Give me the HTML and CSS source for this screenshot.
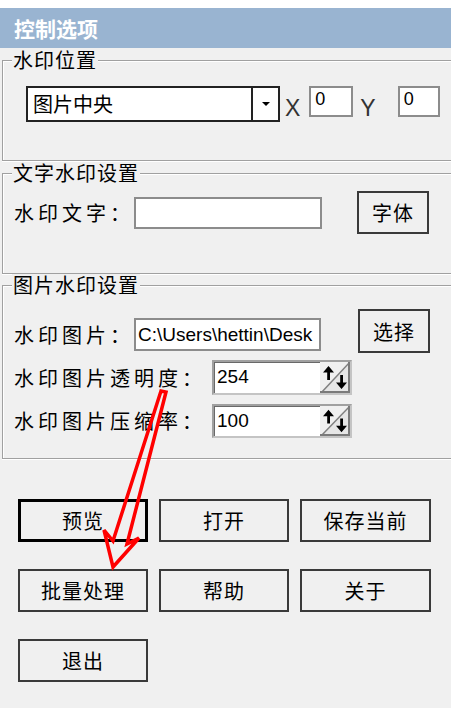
FILE: index.html
```html
<!DOCTYPE html>
<html lang="zh-CN">
<head>
    <meta charset="UTF-8">
    <meta name="viewport" content="width=device-width, initial-scale=1.0">
    <title>控制选项</title>
    <link rel="stylesheet" href="styles.css">
</head>
<body>
    <div class="panel">
        <div class="topbar"></div>
        <div class="caption">控制选项</div>

        <fieldset class="group group-pos">
            <legend>水印位置</legend>
            <div class="row row-pos">
                <div class="combo">
                    <span class="combo-text">图片中央</span>
                    <span class="combo-btn"><span class="caret"></span></span>
                </div>
                <span class="axis axis-x">X</span>
                <div class="field field-x">0</div>
                <span class="axis axis-y">Y</span>
                <div class="field field-y">0</div>
            </div>
        </fieldset>

        <fieldset class="group group-text">
            <legend>文字水印设置</legend>
            <div class="row row-text">
                <span class="label">水印文字：</span>
                <div class="text-field"></div>
                <div class="btn btn-font">字体</div>
            </div>
        </fieldset>

        <fieldset class="group group-image">
            <legend>图片水印设置</legend>
            <div class="row row-image">
                <span class="label label-shift">水印图片：</span>
                <div class="text-field path">C:\Users\hettin\Desk</div>
                <div class="btn btn-pick">选择</div>
            </div>
            <div class="row row-alpha">
                <span class="label">水印图片透明度：</span>
                <div class="spin">
                    <span class="spin-value">254</span>
                    <svg class="spin-arrows" width="30" height="31" viewBox="0 0 30 31">
                        <rect width="30" height="31" fill="#f0f0f0"/>
                        <polygon points="30,0 30,31 1,31" fill="#e6e6e6"/>
                        <line x1="1" y1="31" x2="30" y2="0" stroke="#808080" stroke-width="1.5"/>
                        <polyline points="0,30 29,30 29,0" fill="none" stroke="#7a7a7a" stroke-width="2"/>
                        <path d="M8.5 4 L3 10.5 H7.2 V18 H10 V10.5 H14 Z" fill="#000"/>
                        <path d="M21.5 27 L16 20.5 H20.2 V13 H23 V20.5 H27 Z" fill="#000"/>
                    </svg>
                </div>
            </div>
            <div class="row row-rate">
                <span class="label">水印图片压缩率：</span>
                <div class="spin spin-short">
                    <span class="spin-value">100</span>
                    <svg class="spin-arrows" width="30" height="30" viewBox="0 0 30 31" preserveAspectRatio="none">
                        <rect width="30" height="31" fill="#f0f0f0"/>
                        <polygon points="30,0 30,31 1,31" fill="#e6e6e6"/>
                        <line x1="1" y1="31" x2="30" y2="0" stroke="#808080" stroke-width="1.5"/>
                        <polyline points="0,30 29,30 29,0" fill="none" stroke="#7a7a7a" stroke-width="2"/>
                        <path d="M8.5 4 L3 10.5 H7.2 V18 H10 V10.5 H14 Z" fill="#000"/>
                        <path d="M21.5 27 L16 20.5 H20.2 V13 H23 V20.5 H27 Z" fill="#000"/>
                    </svg>
                </div>
            </div>
        </fieldset>

        <div class="actions">
            <div class="btn btn-default">预览</div>
            <div class="btn">打开</div>
            <div class="btn">保存当前</div>
            <div class="btn">批量处理</div>
            <div class="btn">帮助</div>
            <div class="btn">关于</div>
            <div class="btn">退出</div>
        </div>

        <!-- red annotation arrow drawn over the form -->
        <svg class="arrow" width="451" height="708" viewBox="0 0 451 708">
            <polygon points="161,391 113,541 104,530 113,567 139,538 127,544 166,392"
                     fill="none" stroke="#ff0000" stroke-width="3.5" stroke-linejoin="miter"/>
        </svg>
    </div>
</body>
</html>
```

FILE: styles.css
```css
html,
body {
    margin: 0;
}

body {
    background-color: #f0f0f0;
    font-family: "Noto Sans CJK SC", "Noto Sans", sans-serif;
    color: #000;
}

.panel {
    position: relative;
    width: 451px;
    height: 708px;
    overflow: hidden;
}

.topbar {
    height: 8px;
    background: #fff;
}

.caption {
    height: 40px;
    line-height: 40px;
    background-color: #99b4d1;
    color: #fff;
    font-weight: bold;
    font-size: 21px;
    padding-left: 14px;
}

/* group boxes */
.group {
    box-sizing: border-box;
    width: 470px;
    min-width: 0;
    margin: 0 0 0 2px;
    padding: 0 0 0 9px;
    border: 1px solid #a0a0a0;
    box-shadow: inset 1px 1px 0 #fff, 0 1px 0 #fff;
}

.group legend {
    padding: 0 1px;
    font-size: 20px;
    line-height: 22px;
    letter-spacing: 1px;
    background: #f0f0f0;
}

.group-pos {
    margin-top: 1px;
    padding-bottom: 38px;
}

.group-text {
    margin-top: 1px;
    padding-bottom: 39px;
}

.group-image {
    padding-bottom: 20px;
}

.row {
    display: flex;
    align-items: center;
}

.row-pos {
    margin-top: 15px;
    height: 36px;
    align-items: flex-start;
}

.row-text {
    margin-top: 7px;
    height: 43px;
}

.row-image {
    margin-top: 13px;
    height: 44px;
}

.row-alpha {
    margin-top: 7px;
    height: 35px;
}

.row-rate {
    margin-top: 9px;
    height: 34px;
}

.label {
    margin-left: 2px;
    font-size: 20px;
    line-height: 24px;
    letter-spacing: 4px;
    white-space: nowrap;
}

.label-shift {
    margin-top: 7px;
}

/* combo box */
.combo {
    box-sizing: border-box;
    display: flex;
    width: 254px;
    height: 36px;
    margin-left: 14px;
    border: 2px solid #222;
    background: #fff;
}

.combo-text {
    flex: 1;
    padding-left: 5px;
    font-size: 20px;
    line-height: 32px;
}

.combo-btn {
    display: flex;
    align-items: center;
    justify-content: center;
    width: 25px;
    border-left: 2px solid #222;
}

.caret {
    width: 0;
    height: 0;
    border-left: 4px solid transparent;
    border-right: 4px solid transparent;
    border-top: 4px solid #000;
}

.axis {
    align-self: flex-end;
    margin-bottom: 2px;
    font-family: "Liberation Sans", Arial, sans-serif;
    font-size: 23px;
    line-height: 24px;
    color: #333;
}

.axis-x {
    margin-left: 5px;
}

.axis-y {
    margin-left: 7px;
}

.field {
    box-sizing: border-box;
    height: 31px;
    padding: 0 4px;
    border: 2px solid #8c8c8c;
    background: #fff;
    font-family: "Liberation Sans", Arial, sans-serif;
    font-size: 18px;
    line-height: 22px;
}

.field-x {
    width: 44px;
    margin-left: 9px;
}

.field-y {
    width: 42px;
    margin-left: 22px;
}

/* edit boxes */
.text-field {
    box-sizing: border-box;
    width: 188px;
    height: 32px;
    border: 2px solid #8c8c8c;
    background: #fff;
}

.path {
    width: 187px;
    height: 33px;
    margin-top: 7px;
    padding: 0 1px 0 2px;
    overflow: hidden;
    white-space: nowrap;
    font-family: "Liberation Sans", Arial, sans-serif;
    font-size: 19px;
    line-height: 29px;
}

.spin {
    box-sizing: border-box;
    display: flex;
    width: 140px;
    height: 35px;
    margin-left: 6px;
    border: 2px solid #c4c4c4;
    border-top-color: #a0a0a0;
    border-left-color: #a0a0a0;
    box-shadow: inset 1px 1px 0 #696969;
    background: #fff;
}

.spin-short {
    height: 34px;
}

.spin-value {
    flex: 1;
    padding-left: 3px;
    font-family: "Liberation Sans", Arial, sans-serif;
    font-size: 19px;
    line-height: 30px;
}

.spin-arrows {
    display: block;
}

/* buttons */
.btn {
    box-sizing: border-box;
    display: flex;
    align-items: center;
    justify-content: center;
    height: 43px;
    border: 2px solid #3a3a3a;
    background: #f0f0f0;
    font-size: 20px;
    letter-spacing: 1px;
}

.btn-font {
    width: 72px;
    margin-left: 35px;
}

.btn-pick {
    width: 72px;
    height: 44px;
    margin-left: 37px;
}

.btn-default {
    border: 3px solid #000;
}

.actions {
    display: grid;
    grid-template-columns: 130px 130px 131px;
    column-gap: 11px;
    row-gap: 27px;
    margin-top: 40px;
    padding-left: 18px;
}

.arrow {
    position: absolute;
    left: 0;
    top: 0;
    pointer-events: none;
}
```
